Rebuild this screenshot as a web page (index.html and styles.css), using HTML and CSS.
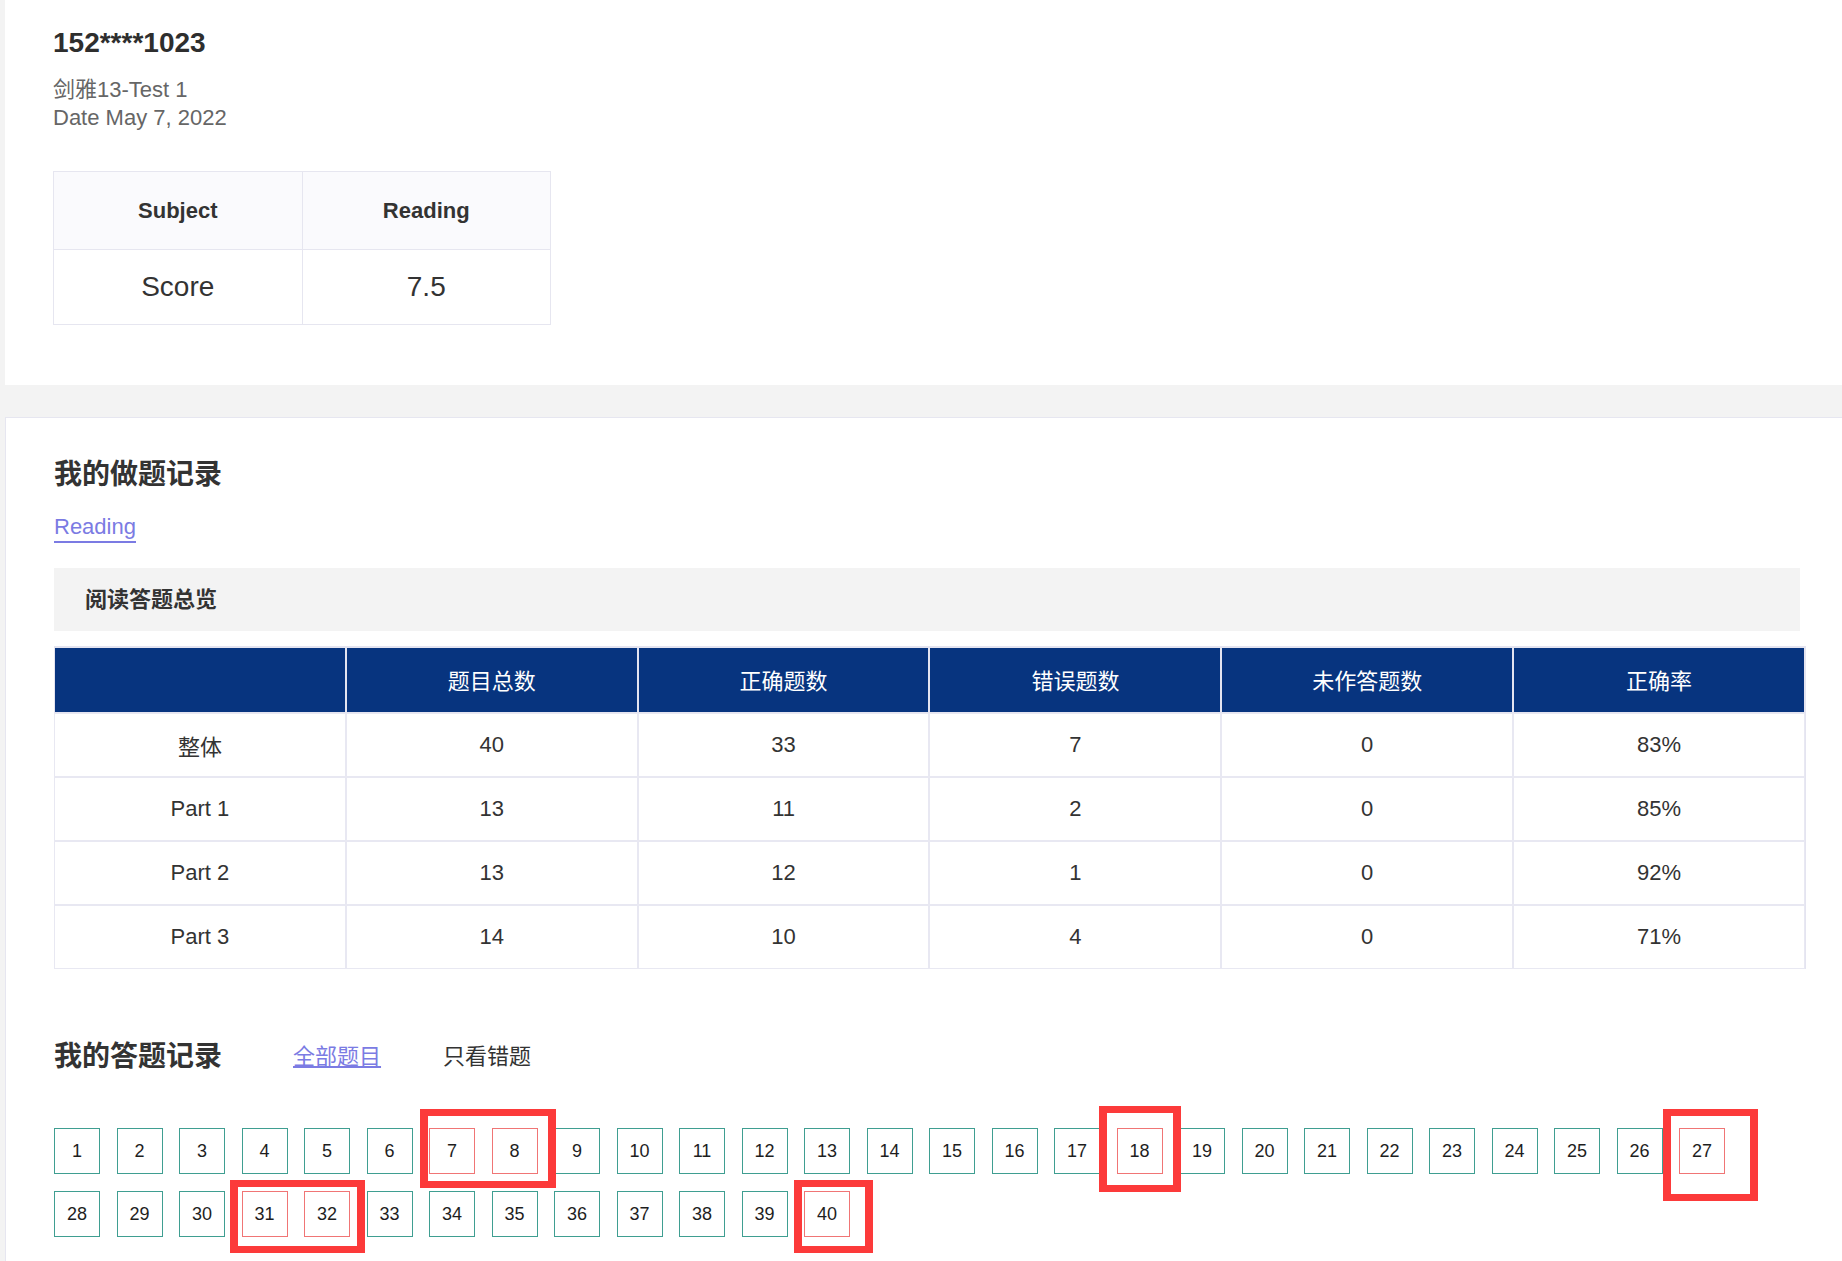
FILE: index.html
```html
<!DOCTYPE html>
<html lang="zh-CN">
<head>
<meta charset="utf-8">
<title>152****1023</title>
<link rel="stylesheet" href="styles.css">
</head>
<body>
<div class="page">
  <section class="card card-info">
    <h1 class="phone">152****1023</h1>
    <div class="meta">
      <div>剑雅13-Test 1</div>
      <div>Date May 7, 2022</div>
    </div>
    <table class="score-table">
      <tr><th>Subject</th><th>Reading</th></tr>
      <tr><td>Score</td><td>7.5</td></tr>
    </table>
  </section>

  <section class="card card-record">
    <h2 class="sec-title">我的做题记录</h2>
    <div class="tabs"><span class="tab active">Reading</span></div>
    <div class="overview-bar">阅读答题总览</div>
    <table class="stat-table">
      <thead>
        <tr><th></th><th>题目总数</th><th>正确题数</th><th>错误题数</th><th>未作答题数</th><th>正确率</th></tr>
      </thead>
      <tbody>
        <tr><td>整体</td><td>40</td><td>33</td><td>7</td><td>0</td><td>83%</td></tr>
        <tr><td>Part 1</td><td>13</td><td>11</td><td>2</td><td>0</td><td>85%</td></tr>
        <tr><td>Part 2</td><td>13</td><td>12</td><td>1</td><td>0</td><td>92%</td></tr>
        <tr><td>Part 3</td><td>14</td><td>10</td><td>4</td><td>0</td><td>71%</td></tr>
      </tbody>
    </table>

    <div class="answer-head">
      <h2 class="sec-title">我的答题记录</h2>
      <a class="filter active" href="#">全部题目</a>
      <span class="filter">只看错题</span>
    </div>

    <div class="answers">
      <span class="q">1</span><span class="q">2</span><span class="q">3</span><span class="q">4</span><span class="q">5</span><span class="q">6</span><span class="q wrong">7</span><span class="q wrong">8</span><span class="q">9</span><span class="q">10</span><span class="q">11</span><span class="q">12</span><span class="q">13</span><span class="q">14</span><span class="q">15</span><span class="q">16</span><span class="q">17</span><span class="q wrong">18</span><span class="q">19</span><span class="q">20</span><span class="q">21</span><span class="q">22</span><span class="q">23</span><span class="q">24</span><span class="q">25</span><span class="q">26</span><span class="q wrong">27</span>
      <span class="q">28</span><span class="q">29</span><span class="q">30</span><span class="q wrong">31</span><span class="q wrong">32</span><span class="q">33</span><span class="q">34</span><span class="q">35</span><span class="q">36</span><span class="q">37</span><span class="q">38</span><span class="q">39</span><span class="q wrong">40</span>
      <div class="mark mark-a"></div>
      <div class="mark mark-b"></div>
      <div class="mark mark-c"></div>
      <div class="mark mark-d"></div>
      <div class="mark mark-e"></div>
    </div>
  </section>
</div>
</body>
</html>
```

FILE: styles.css
```css
html, body {
  margin: 0;
  padding: 0;
}
body {
  background: #f3f3f3;
  font-family: "Liberation Sans", Arial, "Noto Sans CJK SC", sans-serif;
  color: #333;
  overflow: hidden;
}
.page {
  padding-left: 5px;
}
.card {
  background: #fff;
  box-sizing: border-box;
}
.card-info {
  padding: 27px 48px 60px 48px;
}
.phone {
  margin: 0;
  font-size: 28px;
  line-height: 32px;
  font-weight: bold;
  color: #2e2e2e;
}
.meta {
  margin-top: 17px;
  font-size: 22px;
  line-height: 28px;
  color: #666;
}
.score-table {
  margin-top: 39px;
  width: 498px;
  border-collapse: collapse;
  table-layout: fixed;
}
.score-table th,
.score-table td {
  border: 1px solid #e6e6f0;
  text-align: center;
  color: #333;
}
.score-table th {
  height: 77px;
  padding: 0;
  background: #fafafd;
  font-size: 22px;
  font-weight: bold;
}
.score-table td {
  height: 74px;
  padding: 0;
  font-size: 28px;
}

.card-record {
  margin-top: 32px;
  border: 1px solid #e6e6f0;
  border-right: none;
  padding: 37px 36px 40px 48px;
  min-height: 900px;
}
.sec-title {
  margin: 0;
  font-size: 28px;
  line-height: 40px;
  font-weight: bold;
  color: #333;
}
.tabs {
  margin-top: 18px;
  display: flex;
}
.tab {
  font-size: 22px;
  line-height: 28px;
  color: #7b7be3;
  border-bottom: 2px solid #7b7be3;
}
.overview-bar {
  margin-top: 25px;
  margin-right: 6px;
  height: 63px;
  line-height: 63px;
  background: #f3f3f3;
  padding-left: 31px;
  font-size: 22px;
  font-weight: bold;
  color: #333;
}
.stat-table {
  margin-top: 15px;
  width: 100%;
  border-collapse: separate;
  border-spacing: 0;
  table-layout: fixed;
  border-top: 1px solid #e4e4f0;
  border-right: 1px solid #e4e4f0;
}
.stat-table th,
.stat-table td {
  border: 1px solid #e4e4f0;
  padding: 0;
  height: 62px;
  text-align: center;
  font-size: 22px;
}
.stat-table th {
  background: #07347f;
  color: #fff;
  font-weight: normal;
  padding-bottom: 2px;
}
.stat-table td {
  color: #333;
  border-color: #e8e8f2;
}

.answer-head {
  margin-top: 68px;
  display: flex;
  align-items: center;
}
.filter {
  font-size: 22px;
  line-height: 40px;
  color: #333;
  text-decoration: none;
  margin-left: 62px;
}
.filter.active {
  margin-left: 71px;
  color: #7b7be3;
  text-decoration: underline;
}
.answers {
  position: relative;
  margin-top: 51px;
  width: 1700px;
  display: flex;
  flex-wrap: wrap;
  column-gap: 16.5px;
  row-gap: 17px;
}
.q {
  box-sizing: border-box;
  width: 46px;
  height: 46px;
  border: 1px solid #3f9e91;
  display: flex;
  align-items: center;
  justify-content: center;
  font-size: 18px;
  color: #1e1e1e;
}
.q.wrong {
  border-color: #f07575;
}
.mark {
  position: absolute;
  box-sizing: border-box;
  border-style: solid;
  border-color: #fc3a3a;
  border-width: 7px 8px;
}
.mark-a { left: 366px; top: -19px; width: 136px; height: 79px; }
.mark-b { left: 1045px; top: -22px; width: 82px; height: 86px; }
.mark-c { left: 1609px; top: -19px; width: 95px; height: 92px; }
.mark-d { left: 176px; top: 52px; width: 135px; height: 73px; }
.mark-e { left: 740px; top: 52px; width: 79px; height: 73px; }
```
